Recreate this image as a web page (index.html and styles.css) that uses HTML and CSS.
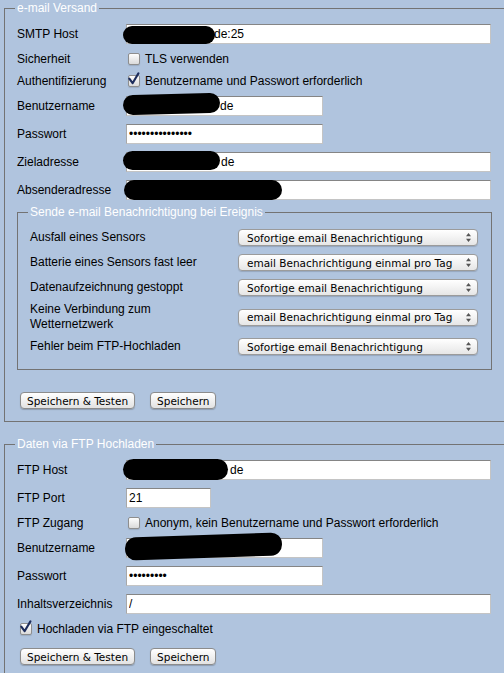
FILE: index.html
```html
<!DOCTYPE html>
<html lang="de">
<head>
    <meta charset="UTF-8">
    <meta name="viewport" content="width=device-width, initial-scale=1.0">
    <title>Einstellungen</title>
    <link rel="stylesheet" href="styles.css">
</head>
<body>

    <fieldset class="group">
        <legend>e-mail Versand</legend>

        <div class="row">
            <label class="lbl" for="smtp_host">SMTP Host</label>
            <span class="field">
                <input class="txt wide ind-smtp" id="smtp_host" type="text" value="de:25">
                <span class="blob blob-smtp"></span>
            </span>
        </div>
        <div class="row short">
            <span class="lbl">Sicherheit</span>
            <label class="check"><input type="checkbox"><span class="box"></span>TLS verwenden</label>
        </div>
        <div class="row short">
            <span class="lbl">Authentifizierung</span>
            <label class="check"><input type="checkbox" checked><span class="box"><svg width="15" height="15" viewBox="0 0 15 15"><path d="M3.3 6.6 L6.6 11.2 L12.4 1.4" fill="none" stroke="#1d2d5c" stroke-width="2.1" stroke-linecap="round" stroke-linejoin="round"/></svg></span>Benutzername und Passwort erforderlich</label>
        </div>
        <div class="row">
            <label class="lbl" for="mail_user">Benutzername</label>
            <span class="field">
                <input class="txt mid ind-user" id="mail_user" type="text" value="de">
                <span class="blob blob-user"></span>
            </span>
        </div>
        <div class="row">
            <label class="lbl" for="mail_pass">Passwort</label>
            <span class="field">
                <input class="txt mid" id="mail_pass" type="password" value="geheimpasswort1">
            </span>
        </div>
        <div class="row">
            <label class="lbl" for="mail_to">Zieladresse</label>
            <span class="field">
                <input class="txt wide ind-to" id="mail_to" type="text" value="de">
                <span class="blob blob-to"></span>
            </span>
        </div>
        <div class="row">
            <label class="lbl" for="mail_from">Absenderadresse</label>
            <span class="field">
                <input class="txt wide" id="mail_from" type="text" value="">
                <span class="blob blob-from"></span>
            </span>
        </div>

        <fieldset class="events">
            <legend>Sende e-mail Benachrichtigung bei Ereignis</legend>

            <div class="ev">
                <span class="lbl">Ausfall eines Sensors</span>
                <span class="sel">
                    <select>
                        <option selected>Sofortige email Benachrichtigung</option>
                        <option>email Benachrichtigung einmal pro Tag</option>
                        <option>Keine Benachrichtigung</option>
                    </select>
                    <svg width="5" height="9" viewBox="0 0 5 9"><path d="M2.5 0 L5 3.3 H0 Z M2.5 9 L5 5.7 H0 Z" fill="#555"/></svg>
                </span>
            </div>
            <div class="ev">
                <span class="lbl">Batterie eines Sensors fast leer</span>
                <span class="sel">
                    <select>
                        <option>Sofortige email Benachrichtigung</option>
                        <option selected>email Benachrichtigung einmal pro Tag</option>
                        <option>Keine Benachrichtigung</option>
                    </select>
                    <svg width="5" height="9" viewBox="0 0 5 9"><path d="M2.5 0 L5 3.3 H0 Z M2.5 9 L5 5.7 H0 Z" fill="#555"/></svg>
                </span>
            </div>
            <div class="ev">
                <span class="lbl">Datenaufzeichnung gestoppt</span>
                <span class="sel">
                    <select>
                        <option selected>Sofortige email Benachrichtigung</option>
                        <option>email Benachrichtigung einmal pro Tag</option>
                        <option>Keine Benachrichtigung</option>
                    </select>
                    <svg width="5" height="9" viewBox="0 0 5 9"><path d="M2.5 0 L5 3.3 H0 Z M2.5 9 L5 5.7 H0 Z" fill="#555"/></svg>
                </span>
            </div>
            <div class="ev">
                <span class="lbl">Keine Verbindung zum Wetternetzwerk</span>
                <span class="sel">
                    <select>
                        <option>Sofortige email Benachrichtigung</option>
                        <option selected>email Benachrichtigung einmal pro Tag</option>
                        <option>Keine Benachrichtigung</option>
                    </select>
                    <svg width="5" height="9" viewBox="0 0 5 9"><path d="M2.5 0 L5 3.3 H0 Z M2.5 9 L5 5.7 H0 Z" fill="#555"/></svg>
                </span>
            </div>
            <div class="ev">
                <span class="lbl">Fehler beim FTP-Hochladen</span>
                <span class="sel">
                    <select>
                        <option selected>Sofortige email Benachrichtigung</option>
                        <option>email Benachrichtigung einmal pro Tag</option>
                        <option>Keine Benachrichtigung</option>
                    </select>
                    <svg width="5" height="9" viewBox="0 0 5 9"><path d="M2.5 0 L5 3.3 H0 Z M2.5 9 L5 5.7 H0 Z" fill="#555"/></svg>
                </span>
            </div>
        </fieldset>

        <div class="buttons">
            <button type="button" class="btn">Speichern &amp; Testen</button>
            <button type="button" class="btn">Speichern</button>
        </div>
    </fieldset>

    <fieldset class="group">
        <legend>Daten via FTP Hochladen</legend>

        <div class="row">
            <label class="lbl" for="ftp_host">FTP Host</label>
            <span class="field">
                <input class="txt wide ind-ftp" id="ftp_host" type="text" value="de">
                <span class="blob blob-ftp"></span>
            </span>
        </div>
        <div class="row">
            <label class="lbl" for="ftp_port">FTP Port</label>
            <span class="field">
                <input class="txt port" id="ftp_port" type="text" value="21">
            </span>
        </div>
        <div class="row short">
            <span class="lbl">FTP Zugang</span>
            <label class="check"><input type="checkbox"><span class="box"></span>Anonym, kein Benutzername und Passwort erforderlich</label>
        </div>
        <div class="row">
            <label class="lbl" for="ftp_user">Benutzername</label>
            <span class="field">
                <input class="txt mid" id="ftp_user" type="text" value="">
                <span class="blob blob-ftpuser"></span>
            </span>
        </div>
        <div class="row">
            <label class="lbl" for="ftp_pass">Passwort</label>
            <span class="field">
                <input class="txt mid" id="ftp_pass" type="password" value="geheim123">
            </span>
        </div>
        <div class="row">
            <label class="lbl" for="ftp_dir">Inhaltsverzeichnis</label>
            <span class="field">
                <input class="txt wide" id="ftp_dir" type="text" value="/">
            </span>
        </div>
        <div class="row short solo">
            <label class="check"><input type="checkbox" checked><span class="box"><svg width="15" height="15" viewBox="0 0 15 15"><path d="M3.3 6.6 L6.6 11.2 L12.4 1.4" fill="none" stroke="#1d2d5c" stroke-width="2.1" stroke-linecap="round" stroke-linejoin="round"/></svg></span>Hochladen via FTP eingeschaltet</label>
        </div>

        <div class="buttons tight">
            <button type="button" class="btn">Speichern &amp; Testen</button>
            <button type="button" class="btn">Speichern</button>
        </div>
    </fieldset>

</body>
</html>
```

FILE: styles.css
```css
html {
    overflow: hidden;
}

body {
    margin: 0;
    background-color: #b0c4de;
    color: #000;
    font: 12px/15px "Liberation Sans", Arial, sans-serif;
}

/* outer boxes */
.group {
    width: 475px;
    margin: 0 0 14px 4px;
    padding: 4px 12px 12px;
    border: 1px solid #737373;
}

legend {
    color: #fff;
    padding: 0 2px;
    margin-left: -2px;
    line-height: 16px;
}

.row {
    display: flex;
    align-items: center;
    height: 28px;
}

.row.short {
    height: 22px;
}

.row.solo {
    padding-left: 1px;
}

.lbl {
    flex: none;
    width: 109px;
}

/* text inputs */
.field {
    position: relative;
    display: block;
}

.txt {
    display: block;
    box-sizing: border-box;
    height: 20px;
    padding: 1px 2px;
    border: 1px solid #c4c4c4;
    border-top-color: #858585;
    border-left-color: #a8a8a8;
    border-radius: 0;
    background-color: #fff;
    font: 12px "Liberation Sans", Arial, sans-serif;
    color: #000;
    outline: none;
}

.wide {
    width: 365px;
}

.mid {
    width: 197px;
}

.port {
    width: 85px;
}

.ind-smtp {
    text-indent: 85px;
}

.ind-user {
    text-indent: 91px;
}

.ind-to {
    text-indent: 92px;
}

.ind-ftp {
    text-indent: 101px;
}

/* blacked out parts of the screenshot */
.blob {
    position: absolute;
    background-color: #000;
    border-radius: 11px;
}

.blob-smtp {
    left: -3px;
    top: 2px;
    width: 92px;
    height: 18px;
}

.blob-user {
    left: -3px;
    top: -2px;
    width: 97px;
    height: 20px;
    transform: rotate(-1.5deg);
}

.blob-to {
    left: -3px;
    top: -1px;
    width: 97px;
    height: 19px;
}

.blob-from {
    left: -2px;
    top: 0;
    width: 158px;
    height: 20px;
}

.blob-ftp {
    left: -3px;
    top: -1px;
    width: 105px;
    height: 21px;
}

.blob-ftpuser {
    left: -1px;
    top: -3px;
    width: 157px;
    height: 23px;
    transform: rotate(-2deg);
}

/* checkboxes */
.check {
    display: flex;
    align-items: center;
}

.check input {
    display: none;
}

.box {
    position: relative;
    flex: none;
    width: 10px;
    height: 10px;
    margin: 0 5px 0 2px;
    border: 1px solid #8e8e8e;
    border-radius: 2px;
    background: linear-gradient(#fdfdfd, #dadada);
    box-shadow: 0 1px 1px rgba(0, 0, 0, 0.12);
}

.box svg {
    position: absolute;
    left: -3px;
    top: -4px;
}

/* event box */
.events {
    margin: 0;
    padding: 5px 12px 10px;
    border: 1px solid #737373;
}

.ev {
    display: flex;
    align-items: center;
    min-height: 21px;
    padding: 2px 0;
}

.ev .lbl {
    width: 200px;
    margin-right: 8px;
}

.sel {
    position: relative;
    display: block;
}

.sel select {
    display: block;
    appearance: none;
    -webkit-appearance: none;
    width: 240px;
    height: 17px;
    margin: 0;
    padding: 0 0 0 8px;
    border: 1px solid #9b9b9b;
    border-radius: 4px;
    background: linear-gradient(#ffffff, #e6e6e6);
    box-shadow: 0 1px 1px rgba(0, 0, 0, 0.15);
    font: 10.5px "DejaVu Sans", sans-serif;
    color: #000;
    outline: none;
}

.sel svg {
    position: absolute;
    right: 7px;
    top: 4px;
    pointer-events: none;
}

/* buttons */
.buttons {
    display: flex;
    gap: 15px;
    margin-top: 22px;
    padding-left: 3px;
}

.buttons.tight {
    margin-top: 8px;
}

.btn {
    height: 17px;
    padding: 0 6px;
    border: 1px solid #8c8c8c;
    border-radius: 4px;
    background: linear-gradient(#ffffff, #e2e2e2);
    box-shadow: 0 1px 1px rgba(0, 0, 0, 0.2);
    font: 10.5px "DejaVu Sans", sans-serif;
    color: #000;
    cursor: pointer;
}
```
